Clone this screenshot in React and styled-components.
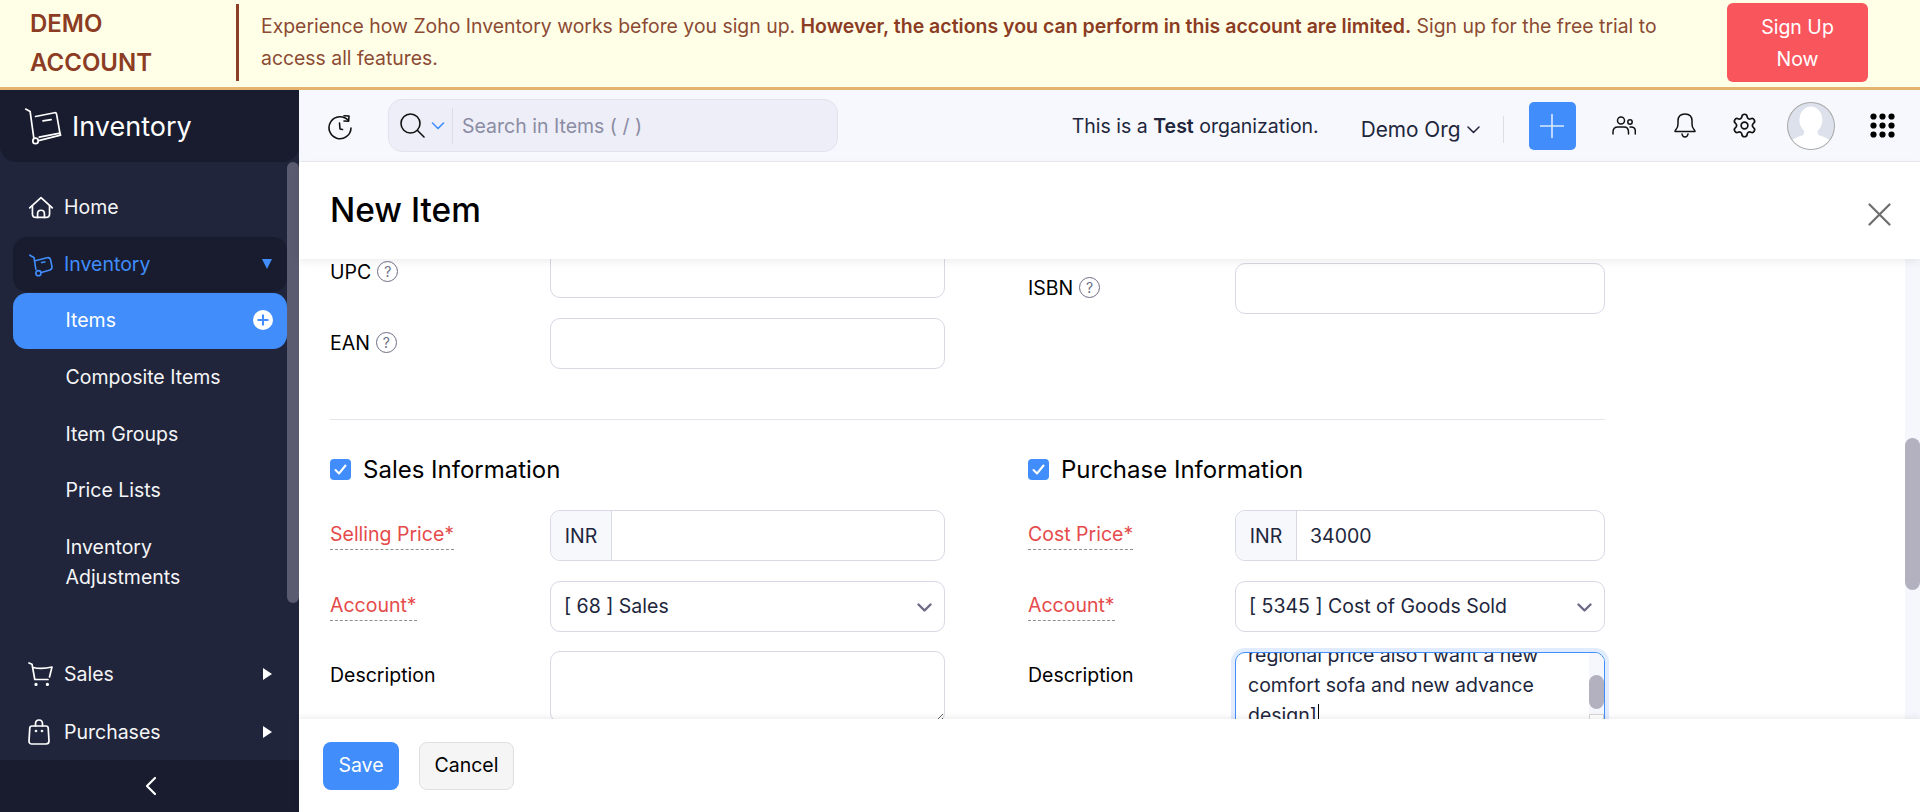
import React from 'react';
import styled, { createGlobalStyle } from 'styled-components';
import { Settings } from 'lucide-react';

const GlobalStyle = createGlobalStyle`
  * { box-sizing: border-box; }
  html, body { margin: 0; padding: 0; height: 100%; overflow: hidden; }
  body { font-family: Inter, "Noto Sans", sans-serif; font-size: 19.5px; color: #21263c; background: #fff; }
`;

const NAV_ITEMS = ['Composite Items', 'Item Groups', 'Price Lists'];

const App = () => {
  return (
    <Page>
      <GlobalStyle />
      <Banner>
        <DemoLabel>DEMO ACCOUNT</DemoLabel>
        <BannerText>
          Experience how Zoho Inventory works before you sign up.{' '}
          <b>However, the actions you can perform in this account are limited.</b> Sign up for the
          free trial to access all features.
        </BannerText>
        <SignUpButton>Sign Up Now</SignUpButton>
      </Banner>
      <Body>
        <Sidebar>
          <LogoBar>
            <svg width="39" height="39" viewBox="70 50 115 115" fill="none" stroke="#fff" strokeWidth="5" strokeLinecap="round" strokeLinejoin="round">
              <path d="M75 56 L88 63 L99 142" />
              <circle cx="104" cy="150" r="8" />
              <path d="M113 149 L178 133 L176 127 L115 139" />
              <path d="M104 78 L160 67 Q165 66 166 71 L176 127" />
              <path d="M126 91 L150 87" />
            </svg>
            <LogoText>Inventory</LogoText>
          </LogoBar>
          <NavArea>
            <Nav>
              <NavRow>
                <NavIcon>
                  <svg width="26" height="23" viewBox="82 48 76 66" fill="none" stroke="#fff" strokeWidth="5" strokeLinecap="round" strokeLinejoin="round">
                    <path d="M87 82 L120 52 L153 82" />
                    <path d="M95 76 V100 Q95 110 105 110 H135 Q145 110 145 100 V76" />
                    <path d="M110 110 V99 Q110 89 120 89 Q130 89 130 99 V110" />
                  </svg>
                </NavIcon>
                Home
              </NavRow>
              <ActiveGroup>
                <NavIcon>
                  <svg width="26" height="25" viewBox="80 210 80 78" fill="none" stroke="#408dfb" strokeWidth="5" strokeLinecap="round" strokeLinejoin="round">
                    <path d="M85 220 L98 227 L104 264" />
                    <circle cx="112" cy="276" r="8" />
                    <path d="M121 274 L148 266 Q156 263 154 254 L150 235 Q148 226 139 228 L102 237" />
                    <path d="M122 243 L132 241" />
                  </svg>
                </NavIcon>
                Inventory
                <Caret $dir="down" />
              </ActiveGroup>
              <SelectedItem>
                Items
                <AddCircle>
                  <svg width="12" height="12" viewBox="0 0 12 12" stroke="#408dfb" strokeWidth="2">
                    <path d="M6 0.5 V11.5 M0.5 6 H11.5" />
                  </svg>
                </AddCircle>
              </SelectedItem>
              {NAV_ITEMS.map((item) => (
                <SubItem key={item}>{item}</SubItem>
              ))}
              <SubItemWrap>Inventory Adjustments</SubItemWrap>
              <NavRow $push>
                <NavIcon>
                  <svg width="25" height="24" viewBox="0 0 25 24" fill="none" stroke="#fff" strokeWidth="1.7" strokeLinecap="round" strokeLinejoin="round">
                    <path d="M1 1 L4 2.2 L6.8 17.5 H20" />
                    <path d="M5 5.5 Q14 7.5 24 5 L21.5 15" />
                    <circle cx="8" cy="22.4" r="0.8" />
                    <circle cx="19.4" cy="22.4" r="0.8" />
                  </svg>
                </NavIcon>
                Sales
                <Caret $dir="right" />
              </NavRow>
              <NavRow>
                <NavIcon>
                  <svg width="22" height="26" viewBox="0 0 22 26" fill="none" stroke="#fff" strokeWidth="1.7" strokeLinecap="round" strokeLinejoin="round">
                    <path d="M4 7 H18 Q20 7 20.2 9 L21 22 Q21 25 18 25 H4 Q1 25 1 22 L1.8 9 Q2 7 4 7 Z" />
                    <path d="M7.5 7 V5 Q7.5 1 11 1 Q14.5 1 14.5 5 V7" />
                    <circle cx="8" cy="12" r="0.5" />
                    <circle cx="14" cy="12" r="0.5" />
                  </svg>
                </NavIcon>
                Purchases
                <Caret $dir="right" />
              </NavRow>
            </Nav>
            <SideScrollThumb />
          </NavArea>
          <CollapseBar>
            <svg width="12" height="20" viewBox="0 0 12 20" fill="none" stroke="#fff" strokeWidth="2.2" strokeLinecap="round" strokeLinejoin="round">
              <path d="M10 2 L2 10 L10 18" />
            </svg>
          </CollapseBar>
        </Sidebar>

        <Main>
          <TopBar>
            <HistoryButton>
              <svg width="26" height="26" viewBox="0 0 26 26" fill="none" stroke="#111" strokeWidth="1.6" strokeLinecap="round" strokeLinejoin="round">
                <path d="M21.4 6.6 A11 11 0 1 0 24 14" />
                <path d="M17 1.8 L22 2 L21.6 7.2 L17 7" />
                <path d="M12.5 9 L13 15 L15.5 15.5" />
              </svg>
            </HistoryButton>
            <SearchBox>
              <svg width="25" height="25" viewBox="0 0 25 25" fill="none" stroke="#111" strokeWidth="1.6" strokeLinecap="round">
                <circle cx="10.5" cy="10.5" r="9.5" />
                <path d="M17.5 17.5 L24 24" />
              </svg>
              <SearchChevron viewBox="0 0 14 8" fill="none" stroke="#408dfb" strokeWidth="1.6" strokeLinecap="round" strokeLinejoin="round">
                <path d="M1.5 1 L7 6.5 L12.5 1" />
              </SearchChevron>
              <SearchPlaceholder>Search in Items ( / )</SearchPlaceholder>
            </SearchBox>
            <OrgNote>
              This is a <b>Test</b> organization.
            </OrgNote>
            <OrgSwitch>
              Demo Org
              <svg width="13" height="8" viewBox="0 0 13 8" fill="none" stroke="#21263c" strokeWidth="1.5" strokeLinecap="round" strokeLinejoin="round">
                <path d="M1 1 L6.5 6.5 L12 1" />
              </svg>
            </OrgSwitch>
            <BarDivider />
            <QuickAdd>
              <svg width="24" height="24" viewBox="0 0 24 24" stroke="#dce9fe" strokeWidth="1.6">
                <path d="M12 0 V24 M0 12 H24" />
              </svg>
            </QuickAdd>
            <BarIcon $left={36}>
              <svg width="24" height="19" viewBox="0 0 24 19" fill="none" stroke="#111" strokeWidth="1.5" strokeLinecap="round">
                <circle cx="9" cy="4.5" r="3.5" />
                <circle cx="18" cy="6" r="2.2" />
                <path d="M1 18 V16 Q1 11 6 11 H12 Q16.5 11 16.5 16 V18" />
                <path d="M18 11 H19 Q23.3 11 23.3 15 V18" />
              </svg>
            </BarIcon>
            <BarIcon $left={38}>
              <svg width="22" height="25" viewBox="0 0 22 25" fill="none" stroke="#111" strokeWidth="1.5" strokeLinecap="round" strokeLinejoin="round">
                <path d="M1 18.5 Q1 17.5 2 16.5 Q4 14.5 4 11 V8 Q4 1 11 1 Q18 1 18 8 V11 Q18 14.5 20 16.5 Q21 17.5 21 18.5 Z" />
                <path d="M8 21 Q8.5 24 11 24 Q13.5 24 14 21" />
              </svg>
            </BarIcon>
            <BarIcon $left={35}>
              <Settings size={27} color="#111" strokeWidth={1.5} />
            </BarIcon>
            <Avatar>
              <svg width="46" height="46" viewBox="0 0 46 46">
                <ellipse cx="23" cy="17" rx="11.5" ry="13.5" fill="#fff" />
                <path d="M17 26 L15.5 32 Q8 34 3 37.5 Q11 46 23 46 Q35 46 43 37.5 Q38 34 30.5 32 L29 26 Z" fill="#fff" />
              </svg>
            </Avatar>
            <BarIcon $left={35}>
              <svg width="25" height="25" viewBox="0 0 25 25" fill="#000">
                {[3.5, 12.5, 21.5].map((cy) =>
                  [3.5, 12.5, 21.5].map((cx) => <circle key={`${cx}-${cy}`} cx={cx} cy={cy} r="3.1" />)
                )}
              </svg>
            </BarIcon>
          </TopBar>

          <ModalHeader>
            <ModalTitle>New Item</ModalTitle>
            <CloseButton>
              <svg width="23" height="23" viewBox="0 0 23 23" stroke="#6d6d6d" strokeWidth="2.2" strokeLinecap="round">
                <path d="M1.5 1.5 L21.5 21.5 M21.5 1.5 L1.5 21.5" />
              </svg>
            </CloseButton>
          </ModalHeader>

          <FormScroll>
            <FormContent>
              <TwoColumns>
                <Column>
                  <Row $labelWidth={220}>
                    <PlainLabel>
                      UPC <HelpIcon>?</HelpIcon>
                    </PlainLabel>
                    <Field />
                  </Row>
                  <Row $labelWidth={220} $top={20}>
                    <PlainLabel>
                      EAN <HelpIcon>?</HelpIcon>
                    </PlainLabel>
                    <Field />
                  </Row>
                </Column>
                <Column $top={16}>
                  <Row $labelWidth={207}>
                    <PlainLabel>
                      ISBN <HelpIcon>?</HelpIcon>
                    </PlainLabel>
                    <Field />
                  </Row>
                </Column>
              </TwoColumns>
              <Divider />
              <TwoColumns>
                <Column>
                  <SectionTitle>
                    <Check />
                    Sales Information
                  </SectionTitle>
                  <Row $labelWidth={220} $top={26}>
                    <LabelCell>
                      <RequiredLabel>Selling Price*</RequiredLabel>
                    </LabelCell>
                    <Field>
                      <Prefix>INR</Prefix>
                    </Field>
                  </Row>
                  <Row $labelWidth={220} $top={20}>
                    <LabelCell>
                      <RequiredLabel>Account*</RequiredLabel>
                    </LabelCell>
                    <Field>
                      <SelectValue>[ 68 ] Sales</SelectValue>
                      <SelectArrow />
                    </Field>
                  </Row>
                  <Row $labelWidth={220} $top={19} $alignTop>
                    <DescLabel>Description</DescLabel>
                    <PlainTextarea readOnly />
                  </Row>
                </Column>
                <Column>
                  <SectionTitle>
                    <Check />
                    Purchase Information
                  </SectionTitle>
                  <Row $labelWidth={207} $top={26}>
                    <LabelCell>
                      <RequiredLabel>Cost Price*</RequiredLabel>
                    </LabelCell>
                    <Field>
                      <Prefix>INR</Prefix>
                      <FieldValue>34000</FieldValue>
                    </Field>
                  </Row>
                  <Row $labelWidth={207} $top={20}>
                    <LabelCell>
                      <RequiredLabel>Account*</RequiredLabel>
                    </LabelCell>
                    <Field>
                      <SelectValue>[ 5345 ] Cost of Goods Sold</SelectValue>
                      <SelectArrow />
                    </Field>
                  </Row>
                  <Row $labelWidth={207} $top={19} $alignTop>
                    <DescLabel>Description</DescLabel>
                    <FocusedArea>
                      <AreaText>
                        regional price also i want a new comfort sofa and new advance design]
                        <AreaCaret />
                      </AreaText>
                      <AreaTrack>
                        <AreaThumb />
                      </AreaTrack>
                      <AreaCorner />
                    </FocusedArea>
                  </Row>
                </Column>
              </TwoColumns>
            </FormContent>
            <PageTrack>
              <PageThumb />
            </PageTrack>
          </FormScroll>

          <Footer>
            <SaveButton>Save</SaveButton>
            <CancelButton>Cancel</CancelButton>
          </Footer>
        </Main>
      </Body>
    </Page>
  );
};

const SelectArrow = () => (
  <ArrowWrap>
    <svg width="15" height="10" viewBox="0 0 15 10" fill="none" stroke="#6d6b85" strokeWidth="2.4" strokeLinecap="round" strokeLinejoin="round">
      <path d="M1.5 1.5 L7.5 7.5 L13.5 1.5" />
    </svg>
  </ArrowWrap>
);

const Check = () => (
  <CheckBox>
    <svg width="13" height="11" viewBox="0 0 13 11" fill="none" stroke="#fff" strokeWidth="2" strokeLinecap="round" strokeLinejoin="round">
      <path d="M1.5 6 L5 9.5 L11.5 1.5" />
    </svg>
  </CheckBox>
);

const Page = styled.div`
  width: 1920px;
  height: 812px;
  display: flex;
  flex-direction: column;
  overflow: hidden;
`;

const Banner = styled.div`
  height: 90px;
  flex: none;
  display: flex;
  align-items: center;
  padding: 0 52px 3px 30px;
  background: #ffffe8;
  border-bottom: 3px solid #e4b46f;
`;

const DemoLabel = styled.div`
  width: 209px;
  height: 77px;
  flex: none;
  padding-right: 60px;
  border-right: 3px solid #8c4028;
  color: #8c3c23;
  font-size: 24px;
  font-weight: 600;
  line-height: 39px;
`;

const BannerText = styled.div`
  width: 1472px;
  flex: none;
  padding: 0 0 0 22px;
  color: #8c4a33;
  font-size: 19.4px;
  line-height: 32px;
  b { font-size: 19.5px; font-weight: 600; color: #8c3c23; }
`;

const SignUpButton = styled.div`
  width: 141px;
  height: 79px;
  flex: none;
  margin-left: 16px;
  display: flex;
  align-items: center;
  padding: 1px 30px 0;
  text-align: center;
  background: #f9555d;
  color: #fff;
  border-radius: 6px;
  font-size: 19.5px;
  line-height: 32px;
`;

const Body = styled.div`
  flex: 1;
  display: flex;
  min-height: 0;
`;

const Sidebar = styled.aside`
  width: 299px;
  flex: none;
  display: flex;
  flex-direction: column;
  background: #20253b;
  color: #f5f5f7;
`;

const LogoBar = styled.div`
  height: 72px;
  flex: none;
  display: flex;
  align-items: center;
  gap: 9px;
  padding: 0 0 0 24px;
  background: #181c2e;
  border-radius: 0 0 16px 16px;
`;

const LogoText = styled.span`
  color: #fff;
  font-size: 27px;
`;

const NavArea = styled.div`
  flex: 1;
  position: relative;
  min-height: 0;
`;

const Nav = styled.nav`
  height: 100%;
  display: flex;
  flex-direction: column;
  padding: 17px 12px 0 13px;
`;

const NavRow = styled.div`
  height: 56px;
  flex: none;
  display: flex;
  align-items: center;
  padding: 0 15px;
  margin: ${({ $push }) => ($push ? 'auto 0 2px' : '0')};
  font-size: 19.5px;
`;

const NavIcon = styled.span`
  width: 36px;
  flex: none;
  display: flex;
  align-items: center;
`;

const ActiveGroup = styled(NavRow)`
  height: 55px;
  margin: 2px 0 1px;
  padding-bottom: 1px;
  background: #181c2e;
  border-radius: 14px;
  color: #408dfb;
`;

const Caret = styled.span`
  margin-left: auto;
  width: 0;
  height: 0;
  border-style: solid;
  ${({ $dir }) =>
    $dir === 'down'
      ? 'border-width: 10px 5.5px 0 5.5px; border-color: #408dfb transparent transparent transparent;'
      : 'border-width: 6px 0 6px 9px; border-color: transparent transparent transparent #fff;'}
`;

const SubItem = styled.div`
  height: 56.5px;
  flex: none;
  display: flex;
  align-items: center;
  padding: 0 14px 0 52.5px;
  font-size: 19.5px;
`;

const SelectedItem = styled(SubItem)`
  height: 56px;
  padding-bottom: 2px;
  justify-content: space-between;
  background: #408dfb;
  border-radius: 14px;
  color: #fff;
`;

const SubItemWrap = styled.div`
  flex: none;
  width: 190px;
  margin-top: 13px;
  padding-left: 52.5px;
  font-size: 19.5px;
  line-height: 30.6px;
`;

const AddCircle = styled.span`
  width: 20px;
  height: 20px;
  display: flex;
  align-items: center;
  justify-content: center;
  background: #fff;
  border-radius: 50%;
`;

const SideScrollThumb = styled.div`
  position: absolute;
  top: 0;
  right: 0;
  width: 12px;
  height: 441px;
  background: #5a5b70;
  border-radius: 8px;
`;

const CollapseBar = styled.div`
  height: 52px;
  flex: none;
  display: flex;
  align-items: center;
  justify-content: center;
  padding-left: 3px;
  background: #181c2e;
`;

const Main = styled.main`
  flex: 1;
  min-width: 0;
  display: flex;
  flex-direction: column;
  background: #fff;
`;

const TopBar = styled.header`
  height: 72px;
  flex: none;
  display: flex;
  align-items: center;
  padding: 0 25px 0 28px;
  background: #f7f8fd;
  border-bottom: 1px solid #e9eaf2;
`;

const HistoryButton = styled.span`
  width: 26px;
  height: 26px;
  display: flex;
  margin-top: 2px;
`;

const SearchBox = styled.div`
  width: 452px;
  height: 53px;
  margin-left: 35px;
  display: flex;
  align-items: center;
  padding: 0 0 0 11px;
  background: #edeef7;
  border: 1px solid #e2e3ee;
  border-radius: 14px;
`;

const SearchChevron = styled.svg`
  width: 14px;
  height: 8px;
  margin-left: 6px;
`;

const SearchPlaceholder = styled.span`
  height: 36px;
  margin-left: 7px;
  padding-left: 9px;
  border-left: 1px solid #dcdde8;
  color: #8a8ca3;
  font-size: 19.5px;
  line-height: 37px;
`;

const OrgNote = styled.div`
  margin-left: 234px;
  width: 289px;
  flex: none;
  font-size: 19.5px;
  b { font-weight: 600; }
`;

const OrgSwitch = styled.div`
  display: flex;
  align-items: center;
  gap: 6px;
  margin-top: 8px;
  font-size: 20.8px;
  white-space: nowrap;
`;

const BarDivider = styled.span`
  width: 1px;
  height: 27px;
  margin: 7px 0 0 23px;
  background: #dcdde5;
`;

const QuickAdd = styled.span`
  width: 48px;
  height: 48px;
  margin-left: 25px;
  display: flex;
  align-items: center;
  justify-content: center;
  background: #408dfb;
  border-radius: 5px;
`;

const BarIcon = styled.span`
  display: flex;
  margin-left: ${({ $left }) => $left}px;
`;

const Avatar = styled.span`
  width: 48px;
  height: 48px;
  margin-left: 29px;
  overflow: hidden;
  background: #dde1ec;
  border: 1px solid #a9a9a9;
  border-radius: 50%;
  display: flex;
`;

const ModalHeader = styled.div`
  height: 97px;
  flex: none;
  position: relative;
  z-index: 2;
  display: flex;
  align-items: center;
  justify-content: space-between;
  padding: 0 29px 0 31px;
  background: #fff;
  box-shadow: 0 3px 8px rgba(0, 0, 0, 0.07);
`;

const ModalTitle = styled.h1`
  margin: 0 0 1px;
  color: #000;
  font-size: 33.4px;
  font-weight: 500;
`;

const CloseButton = styled.span`
  display: flex;
  margin-top: 7px;
`;

const FormScroll = styled.div`
  flex: 1;
  min-height: 0;
  display: flex;
  overflow: hidden;
`;

const FormContent = styled.div`
  width: 1306px;
  flex: none;
  margin-top: -12px;
  padding-left: 31px;
`;

const TwoColumns = styled.div`
  display: grid;
  grid-template-columns: 615px 577px;
  column-gap: 83px;
`;

const Column = styled.div`
  display: flex;
  flex-direction: column;
  padding-top: ${({ $top }) => $top || 0}px;
`;

const Row = styled.div`
  display: flex;
  align-items: ${({ $alignTop }) => ($alignTop ? 'flex-start' : 'center')};
  margin-top: ${({ $top }) => $top || 0}px;
  > :first-child { width: ${({ $labelWidth }) => $labelWidth}px; flex: none; }
`;

const PlainLabel = styled.div`
  display: flex;
  align-items: center;
  gap: 6px;
  margin-top: -2px;
  color: #000;
  font-size: 19.5px;
`;

const HelpIcon = styled.span`
  width: 21px;
  height: 21px;
  display: flex;
  align-items: center;
  justify-content: center;
  border: 1.5px solid #6d6f85;
  border-radius: 50%;
  color: #6d6f85;
  font-size: 14px;
`;

const LabelCell = styled.div`
  margin-top: -2px;
`;

const RequiredLabel = styled.span`
  display: block;
  width: max-content;
  border-bottom: 1px dashed #8f8f8f;
  color: #e54b4b;
  font-size: 19.5px;
  line-height: 30px;
`;

const DescLabel = styled.div`
  color: #000;
  font-size: 19.5px;
  line-height: 30px;
  margin-top: 9px;
`;

const Field = styled.div`
  flex: 1;
  height: 51px;
  display: flex;
  align-items: center;
  overflow: hidden;
  background: #fff;
  border: 1px solid #d8d8e6;
  border-radius: 10px;
`;

const Prefix = styled.span`
  width: 61px;
  height: 100%;
  flex: none;
  display: flex;
  align-items: center;
  justify-content: center;
  background: #f7f8fc;
  border-right: 1px solid #d8d8e6;
  color: #21263c;
  font-size: 19.5px;
`;

const FieldValue = styled.span`
  flex: 1;
  padding-left: 13px;
  color: #21263c;
  font-size: 19.5px;
`;

const SelectValue = styled(FieldValue)`
  margin-top: -2px;
`;

const ArrowWrap = styled.span`
  display: flex;
  margin: 3px 12px 0 0;
`;

const Divider = styled.div`
  height: 1px;
  width: 1275px;
  margin-top: 50px;
  background: #e4e4ea;
`;

const SectionTitle = styled.h2`
  display: flex;
  align-items: center;
  gap: 12px;
  height: 30px;
  margin: 34px 0 0;
  color: #000;
  font-size: 24px;
  font-weight: 400;
`;

const CheckBox = styled.span`
  width: 21px;
  height: 21px;
  display: flex;
  align-items: center;
  justify-content: center;
  background: #408dfb;
  border-radius: 4px;
`;

const PlainTextarea = styled.textarea`
  flex: 1;
  height: 72px;
  display: block;
  margin: 0;
  padding: 8px 12px;
  background: #fff;
  border: 1px solid #d8d8e6;
  border-radius: 10px;
  outline: none;
  resize: vertical;
`;

const FocusedArea = styled.div`
  flex: 1;
  height: 100px;
  position: relative;
  overflow: hidden;
  background: #fff;
  border: 1px solid #408dfb;
  border-radius: 10px;
  box-shadow: 0 0 0 4px #e1ecfe;
  margin-top: 1px;
`;

const AreaText = styled.div`
  width: 340px;
  margin-top: -13px;
  padding-left: 12px;
  color: #21263c;
  font-size: 19.5px;
  line-height: 30px;
`;

const AreaCaret = styled.span`
  display: inline-block;
  width: 1.5px;
  height: 24px;
  margin-left: 1px;
  vertical-align: -6px;
  background: #000;
`;

const AreaTrack = styled.div`
  position: absolute;
  top: 0;
  right: 0;
  width: 15px;
  height: 61px;
  padding-top: 22px;
  background: #f6f7fd;
`;

const AreaThumb = styled.div`
  height: 34px;
  background: #b3b1bf;
  border-radius: 8px;
`;

const AreaCorner = styled.div`
  position: absolute;
  top: 61px;
  right: 0;
  width: 15px;
  height: 15px;
  border: 1px solid #d4d4d4;
`;

const PageTrack = styled.div`
  width: 15px;
  flex: none;
  margin-left: auto;
  padding-top: 179px;
  background: #f6f7fd;
`;

const PageThumb = styled.div`
  height: 152px;
  background: #b3b1bf;
  border-radius: 8px;
`;

const Footer = styled.footer`
  height: 93px;
  flex: none;
  position: relative;
  z-index: 2;
  display: flex;
  gap: 20px;
  padding: 23px 0 0 24px;
  background: #fff;
  box-shadow: 0 -2px 6px rgba(0, 0, 0, 0.07);
`;

const SaveButton = styled.span`
  width: 76px;
  height: 48px;
  display: flex;
  align-items: center;
  justify-content: center;
  padding-bottom: 2px;
  background: #408dfb;
  border-radius: 8px;
  color: #fff;
  font-size: 19.5px;
`;

const CancelButton = styled(SaveButton)`
  width: 95px;
  background: #f5f5f5;
  border: 1px solid #dfdfdf;
  color: #000;
`;

export default App;
